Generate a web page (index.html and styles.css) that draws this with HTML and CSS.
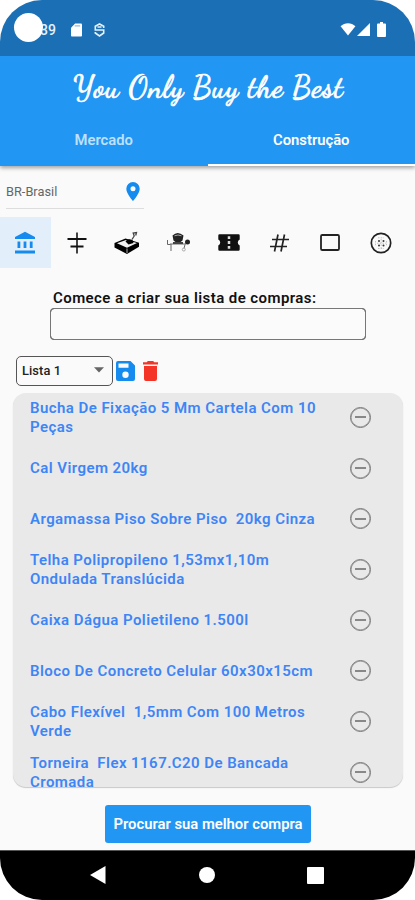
FILE: index.html
```html
<!DOCTYPE html>
<html lang="pt-BR">
<head>
  <meta charset="UTF-8" />
  <meta name="viewport" content="width=device-width, initial-scale=1.0"/>
  <title>You Only Buy the Best</title>
  <link rel="stylesheet" href="styles.css">
</head>
<body>

<div class="phone">

  <!-- Android status bar -->
  <div class="status-bar">
    <div class="status-left">
      <span class="clock">39</span>
      <svg class="sd-icon" width="11" height="14" viewBox="0 0 12 14"><path d="M4.5 0H11a1 1 0 0 1 1 1v12a1 1 0 0 1-1 1H1a1 1 0 0 1-1-1V4.500z" fill="#fff"/><path d="M4 2.500h6" stroke="#8dbce3" stroke-width="1.200"/></svg>
      <svg class="s-icon" width="11" height="14" viewBox="0 0 11 14" fill="none" stroke="#e4f1fc" stroke-width="1.600"><path d="M9.700 5V3.200L5.500 1 1.300 3.200V7h8.400v3L5.500 13 1.300 10V9M3.500 4h4"/></svg>
    </div>
    <div class="status-right">
      <svg width="16" height="13" viewBox="0 0 16 14"><path d="M0 3.500C4.500-.7 11.500-.7 16 3.500L8 13.500z" fill="#fff"/></svg>
      <svg width="13" height="13" viewBox="0 0 13 13"><path d="M13 0v13H0z" fill="#fff"/></svg>
      <svg class="battery" width="9" height="15" viewBox="0 0 9 15"><path d="M3 0h3v1.500h2a1 1 0 0 1 1 1V14a1 1 0 0 1-1 1H1a1 1 0 0 1-1-1V2.500a1 1 0 0 1 1-1h2z" fill="#fff"/></svg>
    </div>
    <span class="camera"></span>
  </div>

  <header class="app-bar">
    <h1>You Only Buy the Best</h1>
    <nav class="tabs">
      <a class="tab">Mercado</a>
      <a class="tab active">Construção</a>
    </nav>
  </header>

  <main>
    <div class="location">
      <span>BR-Brasil</span>
      <svg width="14" height="19" viewBox="0 0 14 19"><path fill="#168bef" fill-rule="evenodd" d="M7 0a6.700 6.700 0 0 0-6.700 6.700C.3 11.500 7 19 7 19s6.700-7.500 6.700-12.300A6.700 6.700 0 0 0 7 0zm0 4.200a2.500 2.500 0 1 1 0 5 2.500 2.500 0 0 1 0-5z"/></svg>
    </div>

    <!-- Categories -->
    <div class="categories">
      <div class="category selected">
        <svg width="22" height="24" viewBox="1 0 22 24" fill="#168bef"><path d="M12 .8 2 6V8h20V6zM4.500 10.500h2.800V17H4.500zM10.600 10.500h2.800V17h-2.800zM16.800 10.500h2.800V17h-2.800zM2 19.500h20v3H2z"/></svg>
      </div>
      <div class="category shifted">
        <svg width="24" height="24" viewBox="0 0 24 24" fill="none" stroke="#222" stroke-width="1.700"><path d="M12 1.500v21"/><path d="M2.500 8h19M5.500 15.500h13" stroke="#111" stroke-width="2.200"/></svg>
      </div>
      <div class="category">
        <svg width="28" height="26" viewBox="0 0 28 26"><path d="m1.500 13 11-4.500 13.500 4.300v4L14 24 1.500 17.500z" fill="#000"/><path d="m4 13.200 9-3.200 11 3-10 4.700z" fill="#f0f0f0"/><path d="M14 18.500v4.500" stroke="#ddd" stroke-width=".8"/><path d="M12.500 11.500q2-3.500 7-1.500l1 3-5 1.500z" fill="#000"/><path d="m19 9.500 2.200-3.500-1-3 3.300-.5-.8 3" fill="none" stroke="#444" stroke-width="1.300"/></svg>
      </div>
      <div class="category">
        <svg width="26" height="24" viewBox="0 0 26 24"><path d="M7.500 4.500q5-5 11 0l-1 5q-4.500 4.500-9 0z" fill="#222"/><path d="M9.500 4.800q3.500-1.600 7 0" stroke="#aaa" fill="none"/><path d="M5 13h16M6 13v7M20 13.500l-1 4M2.500 9v4.500h3" stroke="#666" fill="none"/><circle cx="22.500" cy="11" r="2.500" fill="#222"/><circle cx="18.800" cy="18.500" r="1.500" fill="none" stroke="#aaa"/><path d="M8 13v-2h10v2" fill="#444"/></svg>
      </div>
      <div class="category shifted">
        <svg width="22" height="17" viewBox="0 0 22 17"><path d="M1.500.3h19a1.200 1.200 0 0 1 1.200 1.200V5.500a3.300 3.300 0 0 0 0 6v4a1.200 1.200 0 0 1-1.200 1.200h-19a1.200 1.200 0 0 1-1.200-1.200v-4a3.300 3.300 0 0 0 0-6v-4A1.200 1.200 0 0 1 1.500.3z" fill="#111"/><path d="M11 2.200v12.600" stroke="#ddd" stroke-width="2.500" stroke-dasharray="2.800 2.100"/></svg>
      </div>
      <div class="category">
        <svg width="19" height="18" viewBox="0 0 19 18" fill="none" stroke="#222" stroke-width="1.700"><path d="M8 .5 4.500 17.500M14.500.5 11 17.500M2 5.500h17M0 12.500h17"/></svg>
      </div>
      <div class="category">
        <svg width="20" height="17" viewBox="0 0 20 17"><rect x="1" y="1" width="18" height="15" rx="1.300" fill="none" stroke="#222" stroke-width="1.800"/></svg>
      </div>
      <div class="category">
        <svg width="22" height="22" viewBox="0 0 22 22"><circle cx="11" cy="11" r="9.700" fill="none" stroke="#222" stroke-width="1.700"/><g fill="#333"><circle cx="9" cy="9" r="1"/><circle cx="13.500" cy="9" r="1"/><circle cx="9" cy="13.500" r="1"/><circle cx="13.500" cy="13.500" r="1"/></g><path d="M5.500 9v5M16.500 9v5M8 5.800h6M8 16.500h6M7 11.200h9M11.200 7v9" stroke="#aaa" stroke-width=".7" stroke-dasharray="1.500 1.200"/></svg>
      </div>
    </div>

    <div class="search">
      <label for="product">Comece a criar sua lista de compras:</label>
      <input id="product" type="text">
    </div>

    <div class="list-bar">
      <div class="select">
        <span>Lista 1</span>
        <svg width="10" height="6" viewBox="0 0 10 6"><path d="M0 .3h10L5 5.500z" fill="#666"/></svg>
      </div>
      <svg class="save" width="19" height="20" viewBox="0 0 19 20"><path fill="#168bef" fill-rule="evenodd" d="M2 0h12.500L19 4.500V18a2 2 0 0 1-2 2H2a2 2 0 0 1-2-2V2a2 2 0 0 1 2-2zm.5 2.500v4.300h10V2.500zM9.500 10.500a3.200 3.200 0 1 0 0 6.400 3.200 3.200 0 0 0 0-6.400z"/></svg>
      <svg class="trash" width="15" height="20" viewBox="0 0 15 20"><path fill="#f33427" d="M4.800 0h5.400l1 1.200H15v2.300H0V1.200h3.800zM1 5h13v13a2 2 0 0 1-2 2H3a2 2 0 0 1-2-2z"/></svg>
    </div>

    <ul class="items">
      <li><span>Bucha De Fixação 5 Mm Cartela Com 10 Peças</span><button class="remove"></button></li>
      <li><span>Cal Virgem 20kg</span><button class="remove"></button></li>
      <li><span>Argamassa Piso Sobre Piso  20kg Cinza</span><button class="remove"></button></li>
      <li><span>Telha Polipropileno 1,53mx1,10m Ondulada Translúcida</span><button class="remove"></button></li>
      <li><span>Caixa Dágua Polietileno 1.500l</span><button class="remove"></button></li>
      <li><span>Bloco De Concreto Celular 60x30x15cm</span><button class="remove"></button></li>
      <li><span>Cabo Flexível  1,5mm Com 100 Metros Verde</span><button class="remove"></button></li>
      <li><span>Torneira  Flex 1167.C20 De Bancada Cromada</span><button class="remove"></button></li>
    </ul>

    <button class="find-button">Procurar sua melhor compra</button>
  </main>

  <!-- Android navigation -->
  <footer class="nav-bar">
    <svg width="16" height="18" viewBox="0 0 16 18"><path d="M15.500 0v18L0 9z" fill="#fff"/></svg>
    <svg width="16" height="16" viewBox="0 0 16 16"><circle cx="8" cy="8" r="8" fill="#fff"/></svg>
    <svg width="17" height="17" viewBox="0 0 17 17"><rect width="17" height="17" rx="1" fill="#fff"/></svg>
  </footer>

</div>

</body>
</html>
```

FILE: styles.css
```css
* {
  box-sizing: border-box;
}

body {
  margin: 0;
  background: #fff;
  font-family: Roboto, sans-serif;
}

svg {
  display: block;
  flex-shrink: 0;
}

.phone {
  width: 415px;
  height: 900px;
  display: flex;
  flex-direction: column;
  overflow: hidden;
  border-radius: 42px;
  background: #fafafa;
}

.status-bar {
  position: relative;
  height: 56px;
  padding: 3px 29px 0 40px;
  display: flex;
  align-items: center;
  justify-content: space-between;
  background: #1a6fb5;
}

.status-left,
.status-right {
  display: flex;
  align-items: center;
}

.clock {
  width: 17px;
  color: #e4f1fc;
  font-size: 14px;
  font-weight: 500;
}

.sd-icon {
  margin-left: 14px;
}

.s-icon {
  margin-left: 12px;
}

.status-right {
  gap: 1px;
}

.battery {
  margin-left: 6px;
}

.camera {
  position: absolute;
  left: 14px;
  top: 13px;
  width: 29px;
  height: 29px;
  border-radius: 50%;
  background: #fff;
}

.app-bar {
  height: 110px;
  display: flex;
  flex-direction: column;
  background: #2196f3;
  box-shadow: 0 2px 4px rgba(0, 0, 0, 0.35);
}

h1 {
  margin: 0;
  height: 61px;
  padding-left: 2px;
  line-height: 62px;
  text-align: center;
  white-space: nowrap;
  font-family: 'Dancing Script', cursive;
  font-size: 30px;
  font-weight: 500;
  letter-spacing: 0.9px;
  -webkit-text-stroke: 0.7px #fff;
  color: #fff;
}

.tabs {
  flex: 1;
  display: flex;
}

.tab {
  flex: 1;
  padding-top: 14px;
  text-align: center;
  font-size: 14.8px;
  line-height: 18px;
  font-weight: 600;
  color: #bfe0fb;
  border-bottom: 2px solid transparent;
}

.tab.active {
  color: #fff;
  border-bottom-color: #fff;
}

main {
  flex: 1;
  display: flex;
  flex-direction: column;
}

.location {
  width: 138px;
  height: 43px;
  margin-left: 6px;
  padding: 8px 4px 0 0;
  display: flex;
  align-items: center;
  justify-content: space-between;
  border-bottom: 1px solid #ddd;
  color: #666;
  font-size: 12.8px;
}

.categories {
  height: 51px;
  margin: 8px 9px 0 0;
  display: flex;
}

.category {
  flex: 1;
  display: flex;
  align-items: center;
  justify-content: center;
}

.category.shifted {
  padding-left: 1px;
}

.category.selected {
  background: #e2effa;
}

.search {
  width: 316px;
  margin: 20px 0 0 50px;
}

.search label {
  display: block;
  padding-left: 3px;
  font-size: 15px;
  line-height: 20px;
  font-weight: 600;
  letter-spacing: 0.42px;
  white-space: nowrap;
  color: #111;
}

.search input {
  display: block;
  width: 100%;
  height: 32px;
  border: 1.5px solid #444;
  border-radius: 4px;
  outline: 0.5px solid #777;
  outline-offset: -1.5px;
  background: #fbfbfb;
}

.list-bar {
  display: flex;
  align-items: center;
  margin: 16px 0 0 16px;
  height: 30px;
}

.select {
  width: 97px;
  height: 30px;
  padding: 0 8px 2px 5px;
  display: flex;
  align-items: center;
  justify-content: space-between;
  border: 1px solid #555;
  border-radius: 5px;
  font-size: 12.8px;
  font-weight: 500;
  letter-spacing: 0.1px;
  color: #222;
}

.save {
  margin-left: 3px;
}

.trash {
  margin-left: 8px;
}

.items {
  list-style: none;
  width: 390px;
  height: 394px;
  margin: 7px 0 0 13px;
  padding: 0 32px 0 17px;
  overflow: hidden;
  border-radius: 13px;
  background: #e9e9e9;
  box-shadow: 0 1px 1px rgba(0, 0, 0, 0.2);
}

.items li {
  height: 50.7px;
  margin-top: -0.5px;
  margin-bottom: 0.5px;
  display: flex;
  align-items: center;
  justify-content: space-between;
}

.items span {
  width: 300px;
  font-size: 15px;
  line-height: 19px;
  font-weight: 600;
  letter-spacing: 0.44px;
  white-space: pre-wrap;
  color: #3e85f5;
}

.remove {
  width: 21px;
  height: 21px;
  margin-top: -1px;
  padding: 0;
  display: flex;
  align-items: center;
  justify-content: center;
  border: 1.5px solid #777;
  border-radius: 50%;
  box-shadow: inset 0 0 0 0.5px #888;
  background: none;
}

.remove::before {
  content: '';
  width: 11px;
  height: 2px;
  background: #888;
}

.find-button {
  width: 206px;
  height: 38px;
  margin: 18px 0 0 105px;
  padding: 0;
  border: none;
  border-radius: 3px;
  background: #2196f3;
  color: #fff;
  font-family: inherit;
  font-size: 14.8px;
  font-weight: 600;
  white-space: nowrap;
}

.nav-bar {
  height: 50px;
  padding: 0 91px 1px 90px;
  display: flex;
  align-items: center;
  justify-content: space-between;
  border-top: 1px solid #555;
  background: #000;
}
```
